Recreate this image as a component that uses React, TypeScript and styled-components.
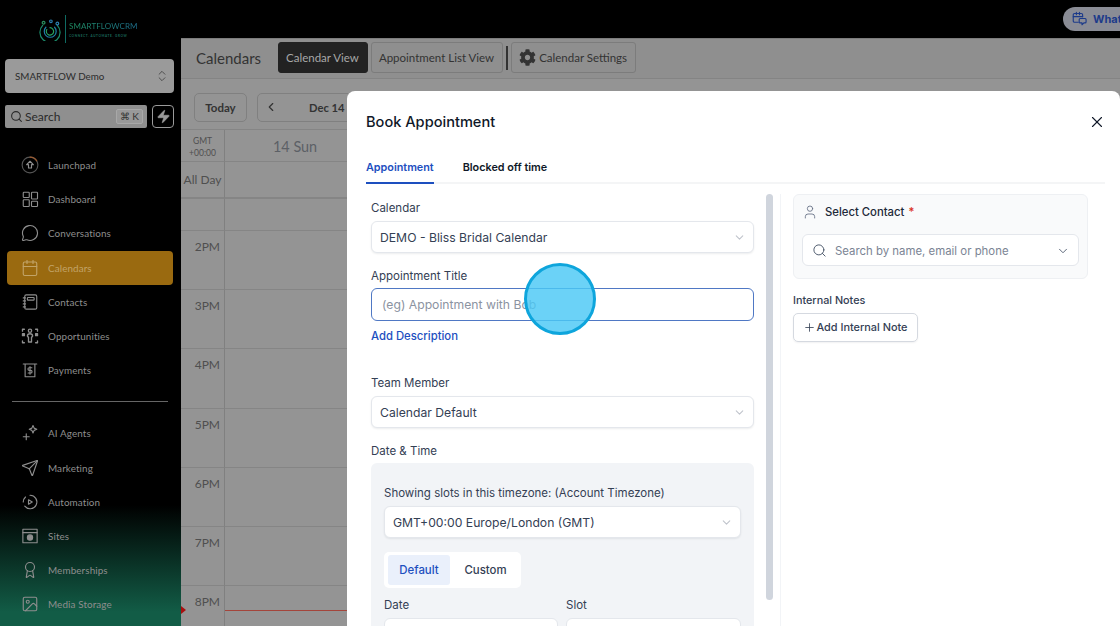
import React from "react";
import styled, { createGlobalStyle } from "styled-components";
import { ChevronDown, ChevronLeft, Search, X, User, Plus, Zap, ChevronsUpDown, MessageCircle, Calendar, Send, Award, Image } from "lucide-react";
import { FaCog } from "react-icons/fa";

const Global = createGlobalStyle`
  html, body { margin: 0; padding: 0; background: #000; }
  * { box-sizing: border-box; }
`;
const Root = styled.div`
  position: relative; width: 1120px; height: 626px; overflow: hidden;
  display: grid; grid-template-columns: 181px 1fr; font-family: "Lato", sans-serif;
`;
const Sidebar = styled.aside`
  display: flex; flex-direction: column; height: 626px; overflow: hidden; padding: 0 6px 0 5px;
  background: linear-gradient(180deg, #000 0, #000 505px, #125c46 612px);
`;
const LogoRow = styled.div`
  height: 59px; flex: none; padding: 15px 0 0 34px; display: flex; align-items: flex-start; gap: 4px;
`;
const LogoMarkBox = styled.div`margin-top: 4px; height: 22px;`;
const LogoRule = styled.div`width: 1px; height: 28px; background: #0f6b63;`;
const LogoWords = styled.div`
  padding: 6px 0 0 0; margin-left: -1px; display: flex; flex-direction: column; gap: 3px;
`;
const LogoName = styled.span`
  font: 400 8px/10px "Lato", sans-serif; letter-spacing: 0.1px; white-space: nowrap;
  background: linear-gradient(90deg, #1f8f62, #1d6f8f); -webkit-background-clip: text; background-clip: text; color: transparent;
`;
const LogoTag = styled.span`
  font: 700 3.1px/4px "Lato", sans-serif; color: #1a6a5c; letter-spacing: 0.6px; white-space: nowrap;
`;
const AccountSelect = styled.div`
  height: 34px; flex: none; width: 169px; border-radius: 4px; background: #9a9a9a; color: #2c2c2c;
  display: flex; align-items: center; justify-content: space-between; padding: 0 5px 0 10px;
  font-size: 9.8px;
`;
const SearchRow = styled.div`
  display: flex; flex: none; gap: 5px; margin-top: 12px; width: 169px;
`;
const SearchBox = styled.div`
  width: 142px; height: 23px; background: #8f8f8f; border-radius: 2px; display: flex; align-items: center;
  padding: 0 4px 1px 5px; gap: 2px; color: #2a2a2a; font-size: 12px;
`;
const Kbd = styled.span`
  margin-left: auto; border: 1px solid #a8a8a8; background: #999; border-radius: 2px; height: 15px;
  padding: 0 3px; font: 400 10px/13px "Lato", sans-serif; color: #333;
`;
const BoltButton = styled.div`
  width: 22px; height: 23px; border: 1px solid #9a9a9a; border-radius: 4px; color: #9a9a9a;
  display: flex; align-items: center; justify-content: center;
`;
const NavGroup = styled.nav`
  display: flex; flex: none; flex-direction: column; padding-left: 2px; margin-top: ${p => p.$top}px;
`;
const NavItem = styled.div`
  height: 34.2px; flex: none; display: flex; align-items: center; padding-left: 14px; gap: 9px; width: 166px;
  border-radius: 4px; font-size: 9.9px; letter-spacing: 0.1px;
  color: ${p => (p.$active ? "#c2a468" : "#8e8e8e")};
  background: ${p => (p.$active ? "#9a6a10" : "transparent")};
  svg { flex: none; width: 18px; height: 18px; color: ${p => (p.$active ? "#c2a468" : "#8e8e8e")}; }
`;
const NavRule = styled.div`height: 1px; flex: none; background: #666; width: 156px; margin: 14px 0 14px 7px;`;

const Content = styled.main`display: flex; flex-direction: column; height: 626px; min-width: 0; overflow: hidden;`;
const TopBar = styled.div`
  height: 38px; flex: none; background: #000; display: flex; align-items: center; justify-content: flex-end;
`;
const WhatsNew = styled.div`
  flex: none; width: 110px; height: 24px; margin: -1px -53px 0 0; border-radius: 12px; background: #8a8c95;
  display: flex; align-items: center; gap: 6px; padding-left: 9px;
  font: 700 11px "Inter", sans-serif; color: #1c3a8a; white-space: nowrap;
`;
const Header = styled.div`
  height: 41px; flex: none; background: #8f8f8f; border-top: 1px solid #7c7c7c; border-bottom: 1px solid #848484;
  display: flex; align-items: center; padding: 0 0 2px 15px; color: #333;
`;
const PageTitle = styled.h1`font: 400 15px "Lato", sans-serif; color: #333; margin: 0 17px 0 0;`;
const ViewTab = styled.div`
  height: 31px; padding: 0 8px 0 7px; display: flex; align-items: center; gap: 3px; border-radius: 3px; font-size: 11.5px;
  margin-right: 3px; white-space: nowrap;
  border: 1px solid ${p => (p.$active ? "#222" : "#7c7c7c")};
  background: ${p => (p.$active ? "#222" : "transparent")};
  color: ${p => (p.$active ? "#a8a8a8" : "#333")};
`;
const TabBar = styled.div`width: 2px; height: 24px; background: #333; margin: 0 3px 0 0;`;
const Toolbar = styled.div`
  height: 51px; flex: none; background: #949494; border-bottom: 1px solid #858585;
  display: flex; align-items: center; padding: 6px 0 0 13px; gap: 10px;
`;
const ToolButton = styled.div`
  height: 29px; border: 1px solid #808080; border-radius: 5px; display: flex; align-items: center;
  font: 700 ${p => (p.$between ? 11.2 : 11.5)}px "Lato", sans-serif; color: #333; width: ${p => p.$w}px;
  justify-content: ${p => (p.$between ? "flex-start" : "center")};
  padding-left: ${p => (p.$between ? 6 : 0)}px; gap: 31px;
`;
const CalGrid = styled.div`
  flex: 1; position: relative; background: #949494; display: grid; grid-template-columns: 44px 1fr;
  grid-auto-rows: min-content; font-family: "Lato", sans-serif;
`;
const Gutter = styled.div`
  height: ${p => p.$h}px; border-right: 1px solid #808080; border-bottom: ${p => p.$b ?? 1}px solid #858585;
  display: flex; flex-direction: column; align-items: ${p => (p.$center ? "center" : "flex-end")};
  justify-content: ${p => (p.$center ? "center" : "flex-start")};
  padding: ${p => p.$pad ?? "9px 4px 0 0"}; color: #4f4f4f;
  font-size: ${p => p.$fs ?? 12}px; line-height: ${p => p.$lh ?? "14px"}; text-align: center;
`;
const DayCell = styled.div`
  height: ${p => p.$h}px; border-bottom: ${p => p.$b ?? 1}px solid #858585; color: #5c6066;
  display: flex; align-items: center; padding: 1px 0 0 48px; font-size: 14.4px;
`;
const NowMark = styled.div`
  position: absolute; left: 0; top: ${p => p.$y}px; width: 0; height: 0;
  border-left: 5px solid #a80f0f; border-top: 4px solid transparent; border-bottom: 4px solid transparent;
`;
const NowLine = styled.div`
  position: absolute; left: 44px; right: 0; top: ${p => p.$y}px; height: 1px; background: #a4453b;
`;

const Modal = styled.section`
  position: absolute; left: 347px; top: 91px; width: 773px; height: 560px; background: #fff;
  border-radius: 8px 8px 0 0; font-family: "Inter", sans-serif; display: flex; flex-direction: column; overflow: hidden;
`;
const ModalHead = styled.div`
  display: flex; flex: none; align-items: center; justify-content: space-between; padding: 19px 14px 0 19px; height: 42px;
  color: #101828;
`;
const ModalTitle = styled.h2`margin: 0; font: 500 14.6px "Inter", sans-serif; color: #101828;`;
const Tabs = styled.div`
  display: flex; flex: none; gap: 29px; margin: 15px 15px 0 19px; height: 36px; border-bottom: 2px solid #f4f5f6;
`;
const Tab = styled.div`
  height: 36px; padding-top: 13px; font: 600 10.8px "Inter", sans-serif;
  color: ${p => (p.$active ? "#1d4fbf" : "#101828")};
  border-bottom: ${p => (p.$active ? "2px solid #1d4fbf" : "none")};
`;
const ModalBody = styled.div`
  display: flex; padding-top: 10px; flex: 1; min-height: 0;
`;
const FormCol = styled.div`
  width: 383px; margin-left: 24px; flex: none; padding-top: 6px; display: flex; flex-direction: column;
  > * { flex: none; }
`;
const FieldLabel = styled.label`
  display: block; height: 14px; padding-top: 1px; font: 400 11.5px/14px "Inter", sans-serif; color: #344054;
  margin-top: ${p => p.$top ?? 0}px; margin-bottom: ${p => p.$bottom ?? 7}px;
`;
const SelectBox = styled.div`
  height: 32px; border: 1px solid #e4e7ec; border-radius: 6px; background: #fff; display: flex; align-items: center;
  justify-content: space-between; padding: 0 7px 0 8px; font: 400 12.2px "Inter", sans-serif; color: #344054;
  box-shadow: 0 1px 2px rgba(16,24,40,.08); svg { color: #c0c4cc; }
`;
const TitleInput = styled.div`
  height: 33px; border: 1px solid #4f78c4; border-radius: 6px; display: flex; align-items: center; padding-left: 10px;
  font: 400 12.2px "Inter", sans-serif; color: #8b93a1;
`;
const LinkText = styled.a`
  display: block; margin-top: 8px; font: 500 11.3px/14px "Inter", sans-serif; color: #1d4fbf;
`;
const Panel = styled.div`
  background: #f2f4f7; border-radius: 6px; padding: 22px 13px 0; height: 200px;
`;
const Segmented = styled.div`
  margin-top: 14px; width: 137px; height: 36px; background: #fff; border-radius: 5px; padding: 3px 4px;
  display: flex; align-items: stretch; font: 500 11.4px "Inter", sans-serif;
`;
const Segment = styled.div`
  flex: none; width: ${p => p.$w}px; border-radius: 3px; display: flex; align-items: center; justify-content: center;
  color: ${p => (p.$active ? "#1d4fbf" : "#344054")};
  background: ${p => (p.$active ? "#eaf0fb" : "transparent")};
`;
const TwoCols = styled.div`display: grid; grid-template-columns: 174px 175px; gap: 8px; margin-top: 9px;`;
const DateInput = styled.div`
  height: 32px; background: #fff; border: 1px solid #e4e7ec; border-radius: 6px;
`;
const Scrollbar = styled.div`
  flex: none; width: 7px; height: 406px; margin-left: 12px; border-radius: 4px; background: #d0d5dd;
`;
const ColRule = styled.div`flex: none; width: 1px; align-self: stretch; background: #f2f4f7; margin-left: 7px;`;
const RightCol = styled.div`flex: none; width: 295px; margin-left: 12px;`;
const ContactCard = styled.div`
  height: 85px; border: 1px solid #eef0f3; background: #f9fafb; border-radius: 6px; padding: 8px 8px 0;
`;
const ContactHead = styled.div`
  display: flex; align-items: center; gap: 7px; padding: 0 0 2px 0; height: 19px;
  font: 500 11.3px "Inter", sans-serif; color: #1d2939; svg { color: #667085; }
`;
const Req = styled.span`color: #d92d20; margin-left: -3px;`;
const ContactSearch = styled.div`
  margin-top: 12px; height: 32px; background: #fff; border: 1px solid #e4e7ec; border-radius: 6px; display: flex;
  align-items: center; padding: 1px 8px 0 9px; gap: 8px; font: 400 11.4px "Inter", sans-serif; color: #7b8494;
  svg { color: #475467; flex: none; }
  svg:last-child { margin-left: auto; }
`;
const NotesLabel = styled.div`margin: 15px 0 5px; font: 500 10.8px/14px "Inter", sans-serif; color: #344054;`;
const NoteButton = styled.div`
  width: 125px; height: 29px; padding-bottom: 1px; border: 1px solid #d5d9e0; border-radius: 5px; display: flex; align-items: center;
  justify-content: center; gap: 0; font: 500 10.9px "Inter", sans-serif; color: #344054;
  box-shadow: 0 1px 2px rgba(16,24,40,.06);
`;
const Pointer = styled.div`
  position: absolute; left: 524px; top: 263px; width: 72px; height: 72px; border-radius: 50%;
  border: 3.5px solid #0ea5dc; background: rgba(75, 200, 245, .82);
`;

const S = { width: 18, height: 18, viewBox: "0 0 24 24", fill: "none", stroke: "currentColor", strokeWidth: 1.5, strokeLinecap: "round", strokeLinejoin: "round" } as const;
const LaunchIcon = () => (
  <svg {...S}><circle cx="12" cy="12" r="10.5" stroke="#555" /><path d="M12 1.5a10.5 10.5 0 0 1 9 5" stroke="#9a5a30" /><path d="M12 7l-4.5 4.5H10V16h4v-4.5h2.5z" /></svg>
);
const DashIcon = () => (
  <svg {...S}><rect x="3" y="3" width="8" height="7" rx="1"/><rect x="14" y="3" width="8" height="9" rx="1"/><rect x="3" y="13" width="8" height="9" rx="1"/><rect x="14" y="15" width="8" height="7" rx="1"/></svg>
);
const ContactIcon = () => (
  <svg {...S}><rect x="5" y="2.5" width="16" height="19" rx="2"/><rect x="8.5" y="6" width="9" height="3.5" rx="1"/><path d="M3 6.5h3M3 10.5h3M3 14.5h3M3 18.5h3"/></svg>
);
const OppIcon = () => (
  <svg {...S} strokeWidth={1.8}><circle cx="12" cy="5" r="2.2"/><path d="M8.5 12c0-2 1.5-3 3.5-3s3.5 1 3.500 3l-1.500 2v6h-4v-6z"/><path d="M2 5.500V3h2.500M22 5.500V3h-2.500M2 18.500V21h2.500M22 18.500V21h-2.500" /><rect x="2" y="9" width="2.500" height="2.500" fill="currentColor"/><rect x="19.500" y="9" width="2.500" height="2.500" fill="currentColor"/></svg>
);
const PayIcon = () => (
  <svg {...S}><path d="M3 4h18M5.500 4v17h13V4"/><path d="M14.500 9H11a1.500 1.500 0 0 0 0 3.500h2a1.500 1.500 0 0 1 0 3.500H9.500M12 7.500v10"/></svg>
);
const AiIcon = () => (
  <svg {...S}><path d="M16 2l1.500 3.500L21 7l-3.500 1.500L16 12l-1.500-3.500L11 7l3.500-1.500z"/><path d="M7 13v8M3 17h8"/></svg>
);
const AutoIcon = () => (
  <svg {...S}><path d="M12 3a9 9 0 1 1-7 14.500M3 12a9 9 0 0 1 3-6.700"/><path d="M10 9l5 3-5 3z"/></svg>
);
const SiteIcon = () => (
  <svg {...S}><rect x="2.500" y="3" width="19" height="18" /><path d="M2.500 7.500h19"/><circle cx="12" cy="14" r="3.500" fill="currentColor"/></svg>
);
const LogoMark = () => (
  <svg width="22" height="22" viewBox="0 0 24 24" fill="none" strokeWidth="1.300" strokeLinecap="round">
    <path d="M4 7a11 11 0 1 0 16 0" stroke="#1c8a6a"/>
    <path d="M7.500 9a6.500 6.500 0 1 0 9.500 0" stroke="#1f7fa8"/>
    <path d="M12 9.500a4 4 0 1 1-3.500 2" stroke="#27a05f"/>
    <circle cx="5" cy="4" r="1.500" stroke="#2a8f5f"/><circle cx="13" cy="2.500" r="1.400" stroke="#2b7fb0"/><circle cx="20" cy="5" r="1.500" stroke="#2b7fb0"/>
  </svg>
);
const NewsIcon = () => (
  <svg width="15" height="15" viewBox="0 0 24 24" fill="none" stroke="#1c3a8a" strokeWidth="1.800" strokeLinecap="round" strokeLinejoin="round">
    <path d="M10 18H4a2 2 0 0 1-2-2V6a2 2 0 0 1 2-2h11a2 2 0 0 1 2 2v3"/><path d="M2 9h15M7 2v4M12 2v4"/>
    <path d="M13 12h8a1.500 1.500 0 0 1 1.500 1.500v4a1.500 1.500 0 0 1-1.500 1.500h-2l-3 3v-3h-3a1.500 1.500 0 0 1-1.500-1.500v-4A1.500 1.500 0 0 1 13 12z"/>
  </svg>
);

const topNav: [string, React.ReactNode, boolean?][] = [
  ["Launchpad", <LaunchIcon />],
  ["Dashboard", <DashIcon />],
  ["Conversations", <MessageCircle strokeWidth={1.5} />],
  ["Calendars", <Calendar strokeWidth={1.5} />, true],
  ["Contacts", <ContactIcon />],
  ["Opportunities", <OppIcon />],
  ["Payments", <PayIcon />],
];
const bottomNav: [string, React.ReactNode][] = [
  ["AI Agents", <AiIcon />],
  ["Marketing", <Send strokeWidth={1.5} />],
  ["Automation", <AutoIcon />],
  ["Sites", <SiteIcon />],
  ["Memberships", <Award strokeWidth={1.5} />],
  ["Media Storage", <Image strokeWidth={1.5} />],
];
const hours = ["2PM", "3PM", "4PM", "5PM", "6PM", "7PM", "8PM"];

export default function App() {
  return (
    <Root>
      <Global />
      <Sidebar>
        <LogoRow>
          <LogoMarkBox><LogoMark /></LogoMarkBox>
          <LogoRule />
          <LogoWords>
            <LogoName>SMARTFLOWCRM</LogoName>
            <LogoTag>CONNECT. AUTOMATE. GROW</LogoTag>
          </LogoWords>
        </LogoRow>
        <AccountSelect>SMARTFLOW Demo <ChevronsUpDown size={14} color="#444" strokeWidth={1.5} /></AccountSelect>
        <SearchRow>
          <SearchBox><Search size={13} strokeWidth={2} />Search<Kbd>⌘ K</Kbd></SearchBox>
          <BoltButton><Zap size={15} fill="#9a9a9a" strokeWidth={1} /></BoltButton>
        </SearchRow>
        <NavGroup $top={20}>
          {topNav.map(([label, icon, active]) => (
            <NavItem key={label} $active={active}>{icon}{label}</NavItem>
          ))}
        </NavGroup>
        <NavRule />
        <NavGroup $top={0}>
          {bottomNav.map(([label, icon]) => (
            <NavItem key={label}>{icon}{label}</NavItem>
          ))}
        </NavGroup>
      </Sidebar>
      <Content>
        <TopBar>
          <WhatsNew><NewsIcon />What's New</WhatsNew>
        </TopBar>
        <Header>
          <PageTitle>Calendars</PageTitle>
          <ViewTab $active>Calendar View</ViewTab>
          <ViewTab>Appointment List View</ViewTab>
          <TabBar />
          <ViewTab><FaCog size={17} color="#333" />Calendar Settings</ViewTab>
        </Header>
        <Toolbar>
          <ToolButton $w={53}>Today</ToolButton>
          <ToolButton $w={120} $between><ChevronLeft size={14} />Dec 14</ToolButton>
        </Toolbar>
        <CalGrid>
          <Gutter $h={32} $center $pad="2px 0 0 0" $fs={8.5} $lh="12px">GMT<br />+00:00</Gutter>
          <DayCell $h={32}>14 Sun</DayCell>
          <Gutter $h={37} $center $pad="1px 0 0 0" $b={2}>All Day</Gutter>
          <DayCell $h={37} $b={2} />
          <Gutter $h={32} />
          <DayCell $h={32} />
          {hours.map(h => (
            <React.Fragment key={h}>
              <Gutter $h={59.2}>{h}</Gutter>
              <DayCell $h={59.2} />
            </React.Fragment>
          ))}
          <NowMark $y={476} />
          <NowLine $y={480} />
        </CalGrid>
      </Content>
      <Modal>
        <ModalHead>
          <ModalTitle>Book Appointment</ModalTitle>
          <X size={18} strokeWidth={1.5} />
        </ModalHead>
        <Tabs>
          <Tab $active>Appointment</Tab>
          <Tab>Blocked off time</Tab>
        </Tabs>
        <ModalBody>
          <FormCol>
            <FieldLabel>Calendar</FieldLabel>
            <SelectBox>DEMO - Bliss Bridal Calendar <ChevronDown size={13} /></SelectBox>
            <FieldLabel $top={15} $bottom={6}>Appointment Title</FieldLabel>
            <TitleInput>(eg) Appointment with Bob</TitleInput>
            <LinkText>Add Description</LinkText>
            <FieldLabel $top={32}>Team Member</FieldLabel>
            <SelectBox>Calendar Default <ChevronDown size={13} /></SelectBox>
            <FieldLabel $top={15} $bottom={6}>Date &amp; Time</FieldLabel>
            <Panel>
              <FieldLabel>Showing slots in this timezone: (Account Timezone)</FieldLabel>
              <SelectBox>GMT+00:00 Europe/London (GMT) <ChevronDown size={13} /></SelectBox>
              <Segmented>
                <Segment $w={62} $active>Default</Segment>
                <Segment $w={71}>Custom</Segment>
              </Segmented>
              <TwoCols>
                <div><FieldLabel>Date</FieldLabel><DateInput /></div>
                <div><FieldLabel>Slot</FieldLabel><DateInput /></div>
              </TwoCols>
            </Panel>
          </FormCol>
          <Scrollbar />
          <ColRule />
          <RightCol>
            <ContactCard>
              <ContactHead><User size={16} strokeWidth={1.3} />Select Contact <Req>*</Req></ContactHead>
              <ContactSearch><Search size={15} strokeWidth={1.5} />Search by name, email or phone<ChevronDown size={14} strokeWidth={1.5} /></ContactSearch>
            </ContactCard>
            <NotesLabel>Internal Notes</NotesLabel>
            <NoteButton><Plus size={13} strokeWidth={1.5} />Add Internal Note</NoteButton>
          </RightCol>
        </ModalBody>
      </Modal>
      <Pointer />
    </Root>
  );
}
